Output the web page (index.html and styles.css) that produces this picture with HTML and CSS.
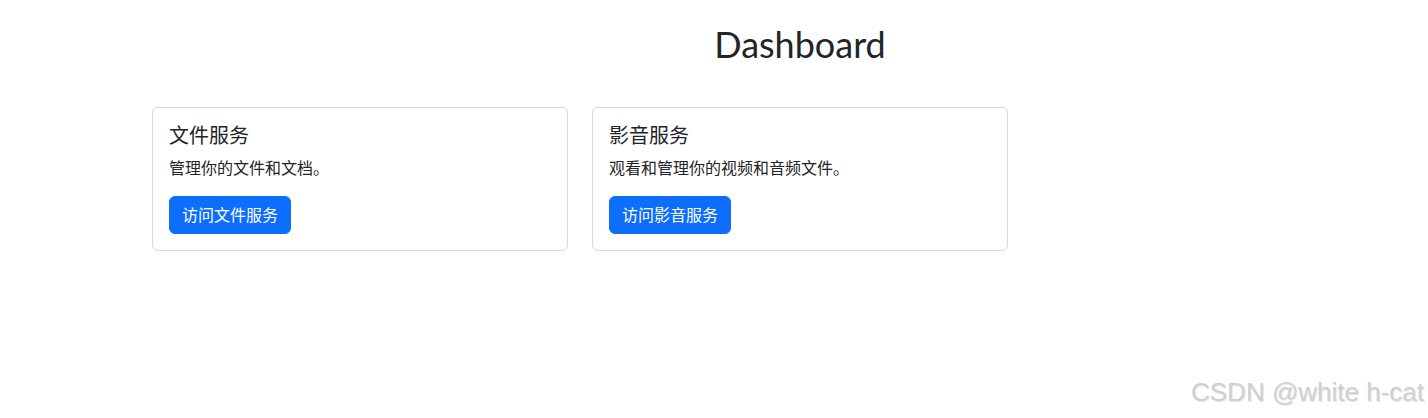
FILE: index.html
```html
<!DOCTYPE html>
<html lang="zh-CN">
	<head>
		<meta charset="UTF-8">
		<meta name="viewport" content="width=device-width, initial-scale=1.0">
		<title>Dashboard</title>
		<link rel="stylesheet" href="styles.css">
	</head>
	<body>
		<div class="container">
			<h1 class="page-title">Dashboard</h1>
			<div class="card-row">
				<div class="card">
					<h5 class="card-title">文件服务</h5>
					<p class="card-text">管理你的文件和文档。</p>
					<a href="#" class="btn">访问文件服务</a>
				</div>
				<div class="card">
					<h5 class="card-title">影音服务</h5>
					<p class="card-text">观看和管理你的视频和音频文件。</p>
					<a href="#" class="btn">访问影音服务</a>
				</div>
			</div>
		</div>
		<div class="watermark">CSDN @white h-cat</div>
	</body>
</html>
```

FILE: styles.css
```css
html, body {
	margin: 0;
	height: 100%;
	overflow: hidden;
}
body {
	font-family: "Noto Sans", "Noto Sans CJK SC", sans-serif;
	font-size: 16px;
	line-height: 1.5;
	color: #212529;
	background: #fff;
	position: relative;
}
.container {
	width: 1296px;
	margin-left: 140px;
	padding: 0 12px;
	margin-top: 20px;
}
.page-title {
	text-align: center;
	font-family: Lato, "Noto Sans", sans-serif;
	font-size: 36px;
	font-weight: 400;
	line-height: 48px;
	margin: 0 0 8px;
}
.card-row {
	display: grid;
	grid-template-columns: 416px 416px;
	gap: 24px;
	margin-top: 39px;
}
.card {
	border: 1px solid rgba(0, 0, 0, 0.15);
	border-radius: 6px;
	padding: 16px;
}
.card-title {
	font-size: 20px;
	font-weight: 400;
	line-height: 1.2;
	margin: 0 0 8px;
}
.card-text {
	margin: 0 0 16px;
	font-size: 16px;
	line-height: 24px;
}
.btn {
	display: inline-block;
	background: #0d6efd;
	color: #fff;
	border: 1px solid #0d6efd;
	border-radius: 6px;
	padding: 6px 12px;
	line-height: 24px;
	text-decoration: none;
}
.watermark {
	position: absolute;
	right: 4px;
	bottom: 6px;
	font-family: "Liberation Sans", Arial, sans-serif;
	font-size: 26px;
	color: #d0d0d0;
	text-shadow: 1px 1px 1px rgba(0, 0, 0, 0.12);
}
```
